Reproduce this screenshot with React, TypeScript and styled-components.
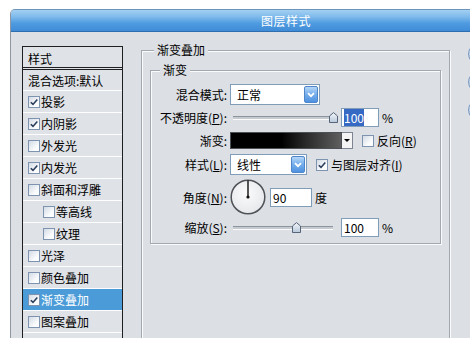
import React from "react";
import styled, { createGlobalStyle } from "styled-components";

const GlobalStyle = createGlobalStyle`
  html, body { margin: 0; padding: 0; background: #fff; overflow: hidden; }
  body {
    font-family: "Noto Sans CJK SC", "Noto Sans", sans-serif;
    font-size: 12px;
    color: #000;
  }
  * { box-sizing: border-box; }
`;

const BG = "#dcdfe4";

const Page = styled.div`
  width: 470px;
  height: 338px;
  overflow: hidden;
  padding: 9px 0 0 10px;
`;

const Window = styled.div`
  width: 551px;
  height: 340px;
  border-left: 1px solid #8f969f;
  border-top: 1px solid #6d94bd;
  border-top-left-radius: 5px;
  background: ${BG};
  overflow: hidden;
  display: flex;
  flex-direction: column;
`;

const TitleBar = styled.div`
  height: 22px;
  border-bottom: 1px solid #2f6eae;
  background: linear-gradient(#a3d0f2, #82bcec 30%, #509ce1 62%, #3f8bd6);
  color: #fff;
  font-size: 12px;
  line-height: 21px;
  text-align: center;
  letter-spacing: 0.5px;
`;

const Body = styled.div`
  display: flex;
  align-items: flex-start;
  padding-left: 11px;
  flex: 1;
`;

const LeftCol = styled.div`
  padding-top: 14px;
  width: 101px;
  flex: none;
`;

const ListBox = styled.div`
  width: 101px;
  min-height: 320px;
  border: 1px solid #1f1f1f;
  background: #dfe2e6;
`;

const ListHeader = styled.div`
  height: 23px;
  line-height: 23px;
  padding-left: 5px;
  border-bottom: 3px double #1f1f1f;
`;

const Item = styled.div<{ $selected?: boolean; $indent?: boolean; $h?: number }>`
  height: ${(p) => (p.$h ?? 22)}px;
  border-bottom: 1px solid #fdfdfd;
  display: flex;
  align-items: center;
  gap: 1px;
  padding-left: ${(p) => (p.$indent ? 20 : 5)}px;
  background: ${(p) => (p.$selected ? "#4a9bd7" : "transparent")};
  color: ${(p) => (p.$selected ? "#fff" : "#000")};
  white-space: nowrap;
`;

const PlainItem = styled(Item)`
  padding-left: 5px;
`;

const CheckBox = styled.span`
  width: 12px;
  height: 12px;
  flex: none;
  border: 1px solid #7d93b0;
  background: linear-gradient(135deg, #d3dbe5, #fbfcfd 70%);
  display: inline-flex;
  align-items: center;
  justify-content: center;
`;

const RightCol = styled.div`
  margin-left: 18px;
  padding-top: 10px;
  flex: none;
`;

const Group = styled.fieldset<{ $w: number; $h?: number }>`
  width: ${(p) => p.$w}px;
  ${(p) => (p.$h ? `height: ${p.$h}px;` : "")}
  margin: 0;
  min-width: 0;
  border: 1px solid #a2a8af;
  box-shadow: inset 1px 1px 0 #fbfbfc, 1px 1px 0 #fbfbfc;
`;

const OuterGroup = styled(Group)`
  padding: 4px 8px 0 8px;
`;

const InnerGroup = styled(Group)`
  padding: 6px 4px 6px 4px;
`;

const Legend = styled.legend<{ $ml: number }>`
  margin-left: ${(p) => p.$ml}px;
  padding: 0 3px;
  line-height: 16px;
  background: ${BG};
  font-size: 12px;
`;

const Form = styled.div`
  display: flex;
  flex-direction: column;
`;

const Row = styled.div<{ $h: number; $mt: number }>`
  display: flex;
  align-items: center;
  height: ${(p) => p.$h}px;
  margin-top: ${(p) => p.$mt}px;
  white-space: nowrap;
`;

const Label = styled.div`
  width: 72px;
  margin-right: 3px;
  text-align: right;
  flex: none;
  white-space: nowrap;
`;

const Select = styled.div<{ $w: number }>`
  width: ${(p) => p.$w}px;
  height: 21px;
  border: 1px solid #7f9db9;
  background: #fff;
  display: flex;
  align-items: center;
  justify-content: space-between;
  padding: 0 1px 0 6px;
  flex: none;
`;

const SelectArrow = styled.span`
  width: 14px;
  height: 17px;
  border-radius: 2px;
  border: 1px solid #4f86c9;
  background: linear-gradient(#b6d7f7, #79b0ec 45%, #4f92e0);
  display: inline-flex;
  align-items: center;
  justify-content: center;
`;

const TextBox = styled.div<{ $w: number; $ml: number }>`
  width: ${(p) => p.$w}px;
  height: 19px;
  margin-left: ${(p) => p.$ml}px;
  border: 1px solid #7f9db9;
  background: #fff;
  padding-left: 2px;
  line-height: 17px;
  flex: none;
`;

const Highlight = styled.span`
  background: #3569c4;
  color: #fff;
`;

const Unit = styled.span`
  margin-left: 3px;
`;

const Slider = styled.div`
  position: relative;
  width: 108px;
  height: 19px;
  display: flex;
  align-items: center;
  flex: none;
`;

const Track = styled.div`
  margin-left: 3px;
  width: 100px;
  height: 4px;
  border-top: 1px solid #8e949b;
  border-bottom: 1px solid #fbfbfb;
  background: #c6cbd1;
`;

const ThumbWrap = styled.div`
  position: absolute;
  top: 4px;
  width: 9px;
  height: 11px;
  display: flex;
`;

const GradientBar = styled.div`
  width: 112px;
  height: 17px;
  border: 1px solid #4d5157;
  background: linear-gradient(to right, #000 0%, #000 46%, #262626 66%, #5f5f5f 100%);
  flex: none;
`;

const GradArrow = styled.div`
  width: 11px;
  height: 17px;
  border: 1px solid #7c8591;
  border-left: none;
  background: #f4f4f4;
  display: flex;
  align-items: center;
  justify-content: center;
  flex: none;
  &::after {
    content: "";
    border-left: 3px solid transparent;
    border-right: 3px solid transparent;
    border-top: 3px solid #000;
  }
`;

const CheckLabel = styled.div<{ $ml: number }>`
  display: flex;
  align-items: center;
  gap: 3px;
  margin-left: ${(p) => p.$ml}px;
`;

const ButtonCol = styled.div`
  margin-left: 18px;
  padding-top: 11px;
  display: flex;
  flex-direction: column;
  gap: 6px;
  flex: none;
`;

const SideButton = styled.div`
  width: 70px;
  height: 22px;
  border-radius: 11px;
  border: 1px solid #7b99c2;
  background: linear-gradient(#dbe6f3, #a9c1de);
`;

const Check = () => (
  <svg width="10" height="10" viewBox="0 0 10 10">
    <path d="M1.8 5.2 L4 7.4 L8.3 2.4" fill="none" stroke="#2b3e5c" strokeWidth="1.6" />
  </svg>
);

const Box = ({ checked }: { checked?: boolean }) => <CheckBox>{checked ? <Check /> : null}</CheckBox>;

const Chevron = () => (
  <svg width="8" height="6" viewBox="0 0 8 6">
    <path d="M1 1.2 L4 4.2 L7 1.2" fill="none" stroke="#fff" strokeWidth="1.8" />
  </svg>
);

const Thumb = ({ left }: { left: number }) => (
  <ThumbWrap style={{ left }}>
    <svg width="9" height="11" viewBox="0 0 9 11">
      <defs>
        <linearGradient id="tg" x1="0" y1="0" x2="0" y2="1">
          <stop offset="0" stopColor="#f3f6fa" />
          <stop offset="1" stopColor="#b9c8da" />
        </linearGradient>
      </defs>
      <path d="M0.5 4 L4.5 0.6 L8.5 4 L8.5 10.5 L0.5 10.5 Z" fill="url(#tg)" stroke="#56657a" strokeWidth="1" />
    </svg>
  </ThumbWrap>
);

const Dial = () => (
  <svg width="36" height="36" viewBox="0 0 36 36" style={{ flex: "none" }}>
    <defs>
      <radialGradient id="dg" cx="0.45" cy="0.4" r="0.6">
        <stop offset="0" stopColor="#fbfbfc" />
        <stop offset="1" stopColor="#e6e8eb" />
      </radialGradient>
    </defs>
    <circle cx="18" cy="18" r="16.8" fill="url(#dg)" stroke="#4f5257" strokeWidth="1.5" />
    <line x1="18" y1="18" x2="18" y2="1.6" stroke="#111" strokeWidth="1.4" />
    <circle cx="18" cy="18" r="1.6" fill="#111" />
  </svg>
);

const items: { text: string; checked?: boolean; indent?: boolean; selected?: boolean }[] = [
  { text: "投影", checked: true },
  { text: "内阴影", checked: true },
  { text: "外发光" },
  { text: "内发光", checked: true },
  { text: "斜面和浮雕" },
  { text: "等高线", indent: true },
  { text: "纹理", indent: true },
  { text: "光泽" },
  { text: "颜色叠加" },
  { text: "渐变叠加", checked: true, selected: true },
  { text: "图案叠加" },
];

export default function App() {
  return (
    <>
      <GlobalStyle />
      <Page>
        <Window>
          <TitleBar>图层样式</TitleBar>
          <Body>
            <LeftCol>
              <ListBox>
                <ListHeader>样式</ListHeader>
                <PlainItem $h={21}>混合选项:默认</PlainItem>
                {items.map((it) => (
                  <Item key={it.text} $selected={it.selected} $indent={it.indent}>
                    <Box checked={it.checked} />
                    <span>{it.text}</span>
                  </Item>
                ))}
              </ListBox>
            </LeftCol>
            <RightCol>
              <OuterGroup $w={309} $h={320}>
                <Legend $ml={4}>渐变叠加</Legend>
                <InnerGroup $w={291}>
                  <Legend $ml={5}>渐变</Legend>
                  <Form>
                    <Row $h={21} $mt={0}>
                      <Label>混合模式:</Label>
                      <Select $w={90}>
                        <span>正常</span>
                        <SelectArrow>
                          <Chevron />
                        </SelectArrow>
                      </Select>
                    </Row>
                    <Row $h={19} $mt={3}>
                      <Label>
                        不透明度(<u>P</u>):
                      </Label>
                      <Slider>
                        <Track />
                        <Thumb left={99} />
                      </Slider>
                      <TextBox $w={38} $ml={3}>
                        <Highlight>100</Highlight>
                      </TextBox>
                      <Unit>%</Unit>
                    </Row>
                    <Row $h={17} $mt={5}>
                      <Label>渐变:</Label>
                      <GradientBar />
                      <GradArrow />
                      <CheckLabel $ml={9}>
                        <Box />
                        <span>
                          反向(<u>R</u>)
                        </span>
                      </CheckLabel>
                    </Row>
                    <Row $h={21} $mt={5}>
                      <Label>
                        样式(<u>L</u>):
                      </Label>
                      <Select $w={77}>
                        <span>线性</span>
                        <SelectArrow>
                          <Chevron />
                        </SelectArrow>
                      </Select>
                      <CheckLabel $ml={9}>
                        <Box checked />
                        <span>
                          与图层对齐(<u>I</u>)
                        </span>
                      </CheckLabel>
                    </Row>
                    <Row $h={36} $mt={4}>
                      <Label>
                        角度(<u>N</u>):
                      </Label>
                      <Dial />
                      <TextBox $w={42} $ml={4}>
                        90
                      </TextBox>
                      <Unit>度</Unit>
                    </Row>
                    <Row $h={19} $mt={3}>
                      <Label>
                        缩放(<u>S</u>):
                      </Label>
                      <Slider>
                        <Track />
                        <Thumb left={62} />
                      </Slider>
                      <TextBox $w={38} $ml={3}>
                        100
                      </TextBox>
                      <Unit>%</Unit>
                    </Row>
                  </Form>
                </InnerGroup>
              </OuterGroup>
            </RightCol>
            <ButtonCol>
              <SideButton />
              <SideButton />
              <SideButton />
            </ButtonCol>
          </Body>
        </Window>
      </Page>
    </>
  );
}
